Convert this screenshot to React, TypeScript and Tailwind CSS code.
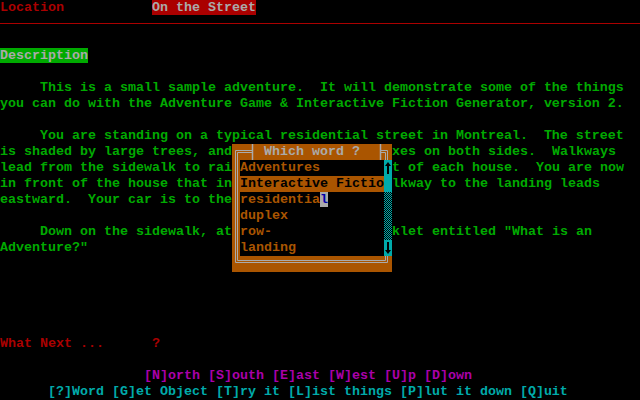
import type { ReactNode } from 'react';

// VGA text-mode palette
const GREEN = 'text-[#00aa00]';

function Line({ children, className }: { children?: ReactNode; className?: string }) {
  return <div className={`h-4 whitespace-pre ${className ?? ''}`}>{children}</div>;
}

// [left, right] — the 20 columns between them sit under the word picker
const DESCRIPTION: (string | [string, string])[] = [
  '     This is a small sample adventure.  It will demonstrate some of the things',
  'you can do with the Adventure Game & Interactive Fiction Generator, version 2.',
  '',
  '     You are standing on a typical residential street in Montreal.  The street',
  ['is shaded by large trees, and', 'xes on both sides.  Walkways'],
  ['lead from the sidewalk to rai', 't of each house.  You are now'],
  ['in front of the house that in', 'lkway to the landing leads'],
  ['eastward.  Your car is to the', ''],
  '',
  ['     Down on the sidewalk, at', 'klet entitled "What is an'],
  'Adventure?"',
];

export default function App() {
  return (
    <div className="relative h-[400px] w-[640px] overflow-hidden bg-black font-['Liberation_Mono',monospace] text-[13.333px] font-bold leading-4">
      <Line>
        <span className="text-[#aa0000]">Location</span>
        {'           '}
        <span className="bg-[#aa0000] text-[#aaaaaa]">On the Street</span>
      </Line>
      <div className="h-4 pt-[7px]">
        <div className="h-px w-full bg-[#aa0000]" />
      </div>
      <Line />
      <Line>
        <span className="bg-[#00aa00] text-[#aaaaaa]">Description</span>
      </Line>
      <Line />
      {DESCRIPTION.map((text, i) =>
        typeof text === 'string' ? (
          <Line key={i} className={GREEN}>
            {text}
          </Line>
        ) : (
          <Line key={i} className={`flex ${GREEN}`}>
            <span className="w-[232px]">{text[0]}</span>
            <span className="w-[160px]" />
            <span>{text[1]}</span>
          </Line>
        ),
      )}
      <Line />
      <Line />
      <Line />
      <Line />
      <Line />
      <Line className="text-[#aa0000]">{'What Next ...      ?'}</Line>
      <Line />
      <Line className="text-[#aa00aa]">{'                  [N]orth [S]outh [E]ast [W]est [U]p [D]own'}</Line>
      <Line className="text-[#00aaaa]">
        {'      [?]Word [G]et Object [T]ry it [L]ist things [P]lut it down [Q]uit'}
      </Line>

      <WordPicker />
    </div>
  );
}

const WORDS = ['Adventures', 'Interactive Fictio', 'residential', 'duplex', 'row-', 'landing'];

function WordPicker() {
  return (
    <div className="absolute left-[232px] top-[144px] flex h-[128px] w-[160px] flex-col bg-[#aa5500]">
      {/* double-line frame */}
      <svg className="absolute inset-0" width="160" height="128" viewBox="0 0 160 128" fill="none">
        <path d="M20.5 6.5H3.5V118.5H155.5V6.5H148.5" stroke="#aaaaaa" />
        <path d="M20.5 8.5H5.5V116.5H153.5V8.5H148.5" stroke="#aaaaaa" />
        <path d="M20.5 0V16M148.5 0V16" stroke="#aaaaaa" strokeWidth="1.5" />
      </svg>

      <div className="relative h-4 whitespace-pre pl-8 text-[#aaaaaa]">Which word ?</div>

      <div className="relative flex h-24 pl-2">
        <div className="w-[144px] bg-black text-[#aa5500]">
          {WORDS.map((w, i) => {
            if (i === 1) {
              return (
                <div key={w} className="h-4 whitespace-pre bg-[#aa5500] text-black">
                  {w}
                </div>
              );
            }
            if (i === 2) {
              return (
                <div key={w} className="h-4 whitespace-pre">
                  residentia<span className="bg-[#aaaaaa] text-[#0000aa]">l</span>
                </div>
              );
            }
            return (
              <div key={w} className="h-4 whitespace-pre">
                {w}
              </div>
            );
          })}
        </div>

        <div className="flex w-2 flex-col">
          <div className="flex h-4 items-center justify-center bg-[#00aaaa]">
            <svg width="8" height="16" viewBox="0 0 8 16">
              <path d="M4 2L1 6H3V14H5V6H7Z" fill="#000" />
            </svg>
          </div>
          <div className="h-4 bg-[#00aaaa]" />
          <div className="h-12 bg-[repeating-conic-gradient(#00aaaa_0_25%,#000_0_50%)] bg-[length:2px_2px]" />
          <div className="flex h-4 items-center justify-center bg-[#00aaaa]">
            <svg width="8" height="16" viewBox="0 0 8 16">
              <path d="M4 14L1 10H3V2H5V10H7Z" fill="#000" />
            </svg>
          </div>
        </div>
      </div>

      <div className="h-4" />
    </div>
  );
}
